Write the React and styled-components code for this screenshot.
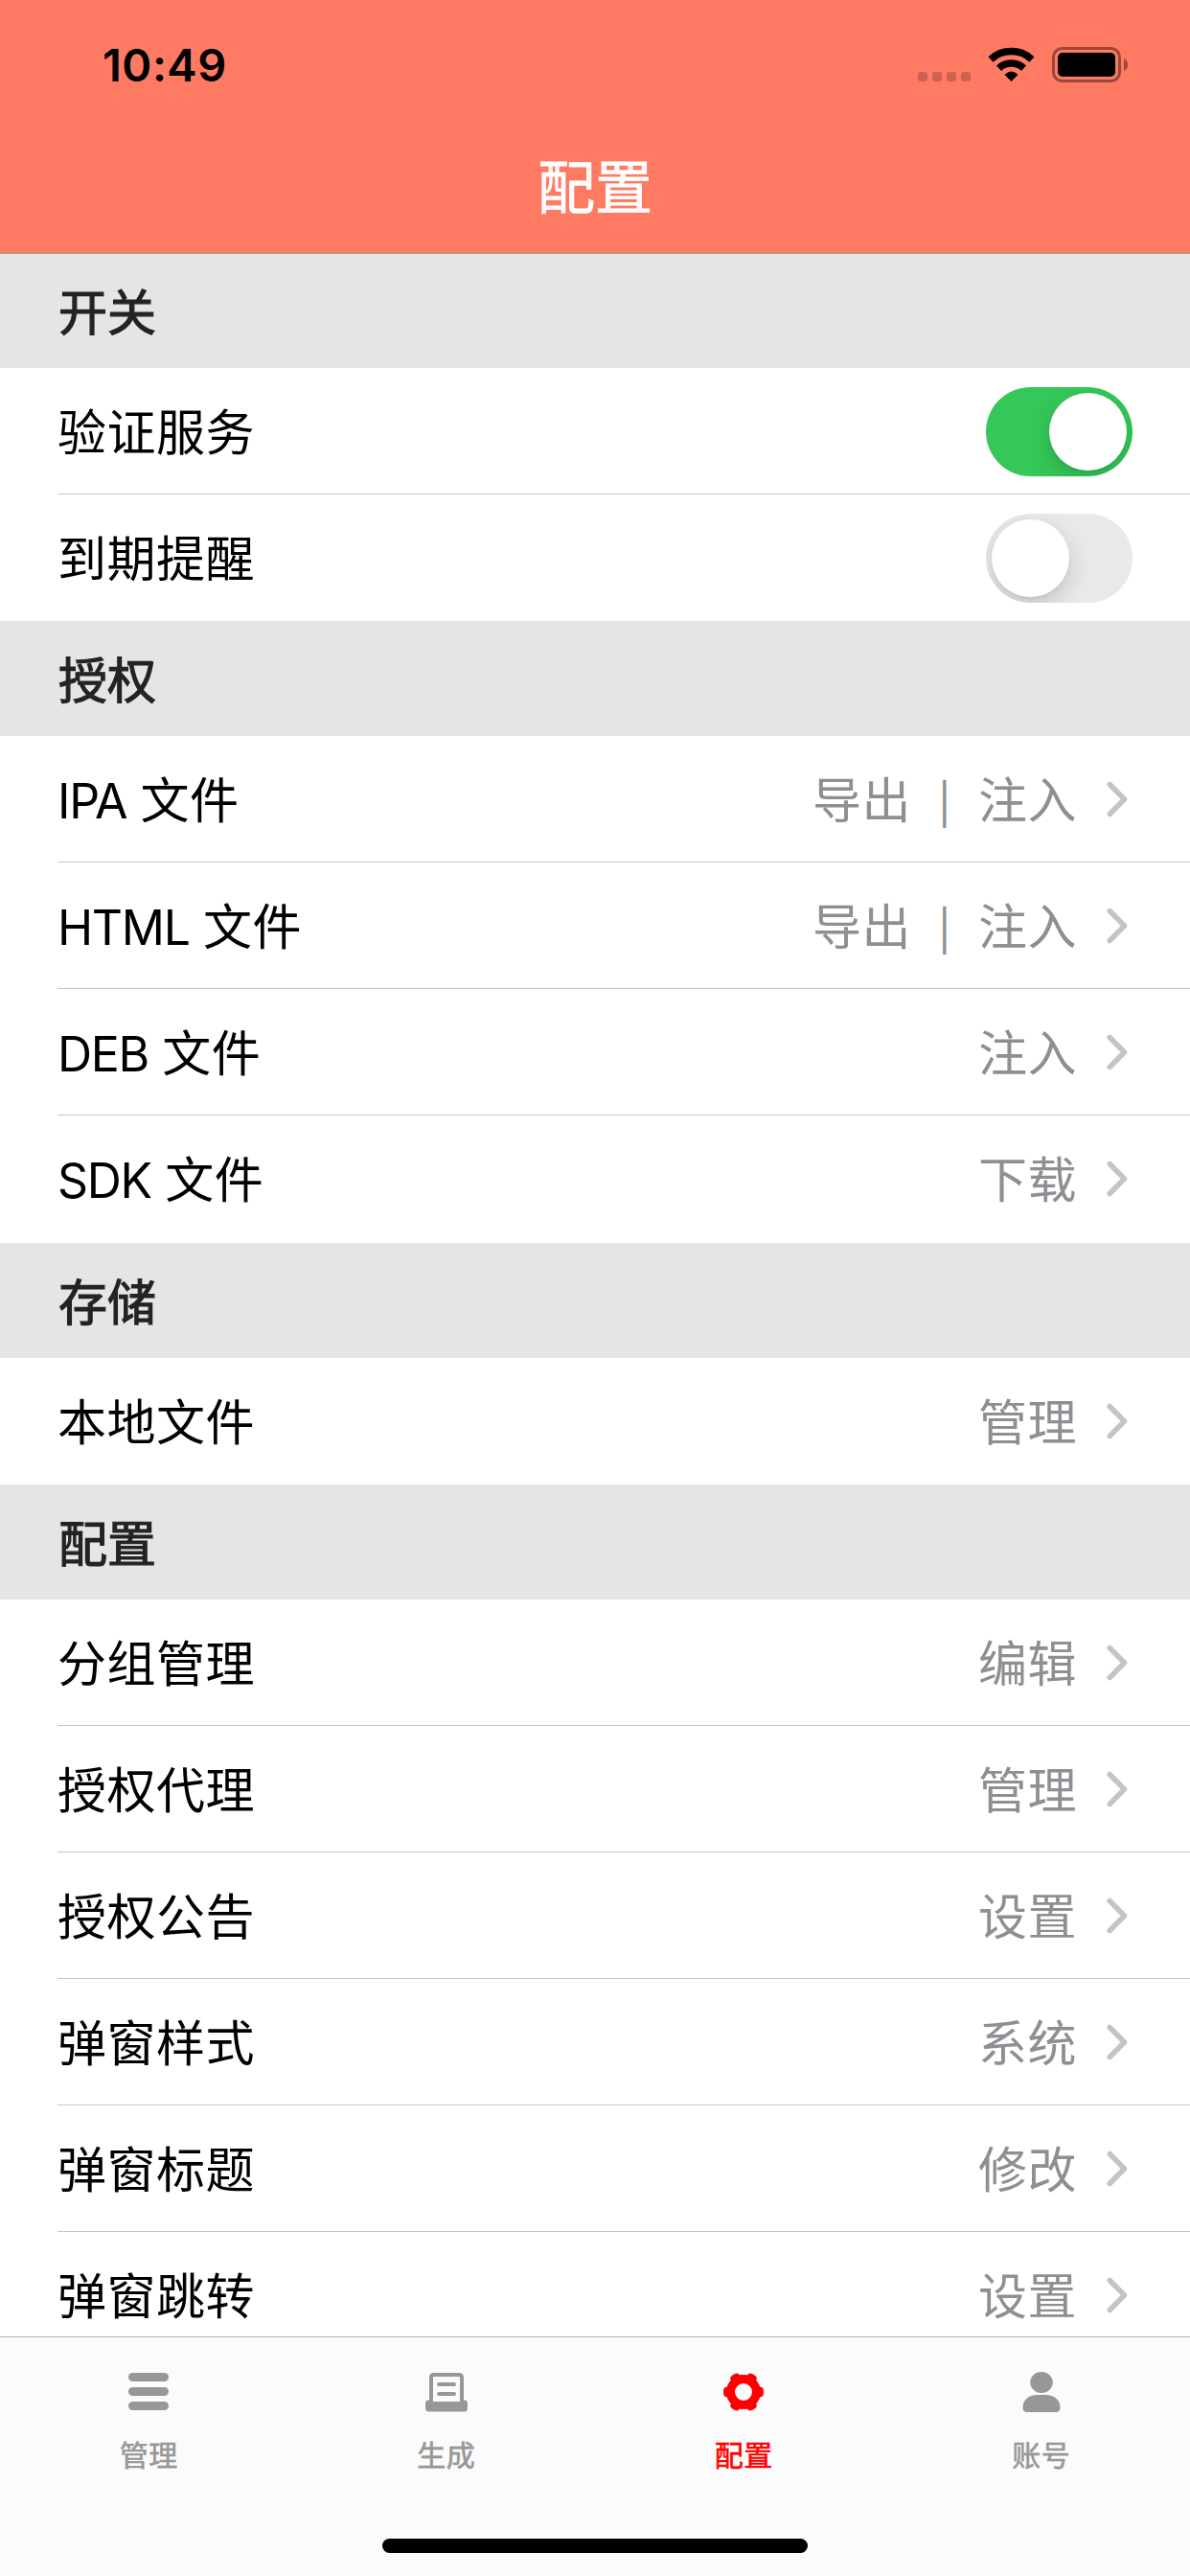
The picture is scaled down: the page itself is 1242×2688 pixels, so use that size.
import React, { useState } from 'react';
import styled, { createGlobalStyle } from 'styled-components';

const GlobalStyle = createGlobalStyle`
  * {
    box-sizing: border-box;
  }
  body {
    margin: 0;
    background: #fff;
    font-family: Inter, 'Noto Sans CJK SC', sans-serif;
  }
`;

const Screen = styled.div`
  display: flex;
  flex-direction: column;
  width: 1242px;
  height: 2688px;
  overflow: hidden;
  background: #fff;
`;

const Header = styled.header`
  flex: none;
  height: 264px;
  background: #ff7a63;
`;

const StatusBar = styled.div`
  display: flex;
  justify-content: space-between;
  height: 132px;
  padding: 0 65px 0 107px;
`;

const Time = styled.span`
  font-size: 47px;
  font-weight: 600;
  line-height: 136px;
  letter-spacing: 0.5px;
`;

const StatusIcons = styled.svg`
  width: 220px;
  height: 38px;
  margin-top: 49px;
`;

const Title = styled.h1`
  margin: 0;
  height: 132px;
  color: #fff;
  font-family: 'Noto Sans CJK SC', sans-serif;
  font-size: 60px;
  font-weight: 400;
  line-height: 120px;
  text-align: center;
  -webkit-text-stroke: 0.8px currentColor;
`;

const List = styled.main`
  flex: 1;
  min-height: 0;
  overflow: hidden;
  border-top: 1px solid #a0a3a8;
`;

const SectionTitle = styled.h2`
  display: flex;
  align-items: center;
  height: 120px;
  margin: 0;
  padding: 0 60px 3px 61px;
  background: #e5e5e5;
  color: #232323;
  font-family: 'Noto Sans CJK SC', sans-serif;
  font-size: 51px;
  font-weight: 400;
  -webkit-text-stroke: 1.2px currentColor;
`;

const Section = styled.section`
  &:first-child > ${SectionTitle} {
    height: 119px;
  }
`;

const Row = styled.div`
  display: flex;
  justify-content: space-between;
  align-items: center;
  height: 132px;
  margin-left: 60px;
  padding-right: 60px;
  border-bottom: 1px solid #c6c6c8;

  &:last-child {
    border-bottom-color: #fff;
  }
  &:nth-child(5) {
    height: ${(props) => (props.$last ? '133px' : '132px')};
  }
`;

const Label = styled.span`
  padding-bottom: 4px;
  font-family: 'Noto Sans CJK SC', sans-serif;
  font-size: 51px;
  letter-spacing: 0.5px;
  line-height: 74px;
  white-space: pre;
`;

const Latin = styled.span`
  margin-right: 1.5px;
  font-family: Inter, sans-serif;
  font-size: 50px;
  letter-spacing: -1.3px;
  line-height: 1;
`;

const Detail = styled.span`
  display: flex;
  align-items: center;
`;

const Value = styled(Label)`
  color: #8e8e93;
`;

const Bar = styled.span`
  display: inline-block;
  width: 70px;
  font-family: Inter, sans-serif;
  font-size: 42px;
  line-height: 1;
  text-align: center;
`;

const Chevron = styled.svg`
  width: 22px;
  height: 38px;
  margin: 0 5px 0 31px;
`;

const Switch = styled.button`
  width: 153px;
  height: 93px;
  margin-top: 1px;
  padding: 6px;
  border: none;
  border-radius: 47px;
  overflow: hidden;
  background: ${(props) => (props.$on ? '#35c759' : '#e9e9eb')};
`;

const Knob = styled.span`
  display: block;
  width: 81px;
  height: 81px;
  margin-left: ${(props) => (props.$on ? '60px' : '0')};
  border-radius: 50%;
  background: #fff;
  box-shadow: 0 9px 24px rgba(0, 0, 0, 0.16), 0 3px 3px rgba(0, 0, 0, 0.04);
`;

const TabBar = styled.nav`
  flex: none;
  height: 250px;
  border-top: 1px solid #b0b0b0;
  background: #fbfbfb;
`;

const Tabs = styled.div`
  display: grid;
  grid-template-columns: repeat(4, 1fr);
  height: 210px;
`;

const Tab = styled.div`
  display: flex;
  flex-direction: column;
  align-items: center;
  padding-top: 33px;
  color: ${(props) => (props.$active ? '#ff0000' : '#979797')};
  font-family: 'Noto Sans CJK SC', sans-serif;
  font-size: 30px;
  font-weight: 400;
  line-height: 44px;
  letter-spacing: 0.5px;
  -webkit-text-stroke: 0.6px currentColor;

  svg {
    width: 48px;
    height: 48px;
    margin-bottom: 18px;
  }
`;

const HomeIndicator = styled.div`
  width: 444px;
  height: 15px;
  margin: 0 auto;
  border-radius: 8px;
  background: #000;
`;

const sections = [
  {
    title: '开关',
    rows: [
      { label: '验证服务', toggle: true, on: true },
      { label: '到期提醒', toggle: true, on: false },
    ],
  },
  {
    title: '授权',
    rows: [
      { latin: 'IPA', label: '文件', values: ['导出', '注入'] },
      { latin: 'HTML', label: '文件', values: ['导出', '注入'] },
      { latin: 'DEB', label: '文件', values: ['注入'] },
      { latin: 'SDK', label: '文件', values: ['下载'], last: true },
    ],
  },
  {
    title: '存储',
    rows: [{ label: '本地文件', values: ['管理'] }],
  },
  {
    title: '配置',
    rows: [
      { label: '分组管理', values: ['编辑'] },
      { label: '授权代理', values: ['管理'] },
      { label: '授权公告', values: ['设置'] },
      { label: '弹窗样式', values: ['系统'] },
      { label: '弹窗标题', values: ['修改'] },
      { label: '弹窗跳转', values: ['设置'] },
    ],
  },
];

// one gear tooth per 60 degrees, rotated around the centre
const gearAngles = [0, 60, 120, 180, 240, 300];

const tabs = [
  {
    name: '管理',
    icon: (
      <svg viewBox="0 0 48 48" fill="currentColor" stroke="none">
        <rect x="3" y="4" width="42" height="9" rx="4.5" />
        <rect x="3" y="19" width="42" height="9" rx="4.5" />
        <rect x="3" y="34" width="42" height="9" rx="4.5" />
      </svg>
    ),
  },
  {
    name: '生成',
    icon: (
      <svg viewBox="0 0 48 48" fill="none" stroke="currentColor" strokeWidth="4">
        <path d="M8 35V9q0-3 3-3h26q3 0 3 3v26" />
        <path d="M16 16h16M16 26h16" strokeLinecap="round" />
        <path
          d="M5 32.5h5V34h28v-1.500h5q3 0 3 4v3q0 5-3 5H5q-3 0-3-5v-3q0-4 3-4z"
          fill="currentColor"
          stroke="none"
        />
      </svg>
    ),
  },
  {
    name: '配置',
    active: true,
    icon: (
      <svg viewBox="0 0 48 48" fill="currentColor">
        <circle cx="24" cy="24" r="13.500" fill="none" stroke="currentColor" strokeWidth="9" />
        {gearAngles.map((angle) => (
          <path
            key={angle}
            d="M37 14.500q1 3.500 5.500 4.500q2.500 0 2.500 5t-2.500 5q-4.500 1-5.500 4.500z"
            transform={`rotate(${angle} 24 24)`}
          />
        ))}
      </svg>
    ),
  },
  {
    name: '账号',
    icon: (
      <svg viewBox="0 0 48 48" fill="currentColor">
        <ellipse cx="24" cy="14" rx="11.800" ry="11" />
        <path d="M20 27h8c10 0 15.500 6 15.500 13 0 3.500-1.500 5-5 5h-29c-3.500 0-5-1.500-5-5 0-7 5.500-13 15.500-13z" />
      </svg>
    ),
  },
];

function Toggle({ initial }) {
  const [on, setOn] = useState(initial);
  return (
    <Switch $on={on} role="switch" aria-checked={on} onClick={() => setOn(!on)}>
      <Knob $on={on} />
    </Switch>
  );
}

function ListRow({ row }) {
  return (
    <Row $last={row.last}>
      <Label>
        {row.latin && <Latin>{row.latin} </Latin>}
        {row.label}
      </Label>
      {row.toggle ? (
        <Toggle initial={row.on} />
      ) : (
        <Detail>
          <Value>
            {row.values.map((value, index) => (
              <React.Fragment key={value}>
                {index > 0 && <Bar>|</Bar>}
                {value}
              </React.Fragment>
            ))}
          </Value>
          <Chevron viewBox="0 0 22 38" fill="none">
            <path
              d="M3.200 3.500L18.500 19L3.200 34.500"
              stroke="#c4c4c6"
              strokeWidth="5.500"
              strokeLinecap="round"
              strokeLinejoin="round"
            />
          </Chevron>
        </Detail>
      )}
    </Row>
  );
}

function App() {
  return (
    <Screen>
      <GlobalStyle />
      <Header>
        <StatusBar>
          <Time>10:49</Time>
          <StatusIcons viewBox="957 49 220 38">
            <g fillOpacity="0.2">
              <rect x="958" y="75" width="10" height="10" rx="3" />
              <rect x="973" y="75" width="10" height="10" rx="3" />
              <rect x="988" y="75" width="10" height="10" rx="3" />
              <rect x="1003" y="75" width="10" height="10" rx="3" />
            </g>
            <path d="M1055.500 85L1049 78.500Q1048.500 78 1049 77.500Q1055.500 71.500 1062 77.500Q1062.500 78 1062 78.500Z" />
            <g fill="none" stroke="#000" strokeWidth="7.500">
              <path d="M1042.500 71.200A19 19 0 0 1 1068.500 71.200" />
              <path d="M1034 62A31.500 31.500 0 0 1 1077 62" />
            </g>
            <rect x="1099.500" y="50.500" width="69" height="34" rx="9" fill="none" stroke="#000" strokeOpacity="0.4" strokeWidth="3" />
            <rect x="1104" y="55" width="60" height="25" rx="5" />
            <path d="M1173 61q4 2 4 6.500t-4 6.500z" fillOpacity="0.4" />
          </StatusIcons>
        </StatusBar>
        <Title>配置</Title>
      </Header>

      <List>
        {sections.map((section) => (
          <Section key={section.title}>
            <SectionTitle>{section.title}</SectionTitle>
            {section.rows.map((row) => (
              <ListRow key={row.label + (row.latin || '')} row={row} />
            ))}
          </Section>
        ))}
      </List>

      <TabBar>
        <Tabs>
          {tabs.map((tab) => (
            <Tab key={tab.name} $active={tab.active}>
              {tab.icon}
              {tab.name}
            </Tab>
          ))}
        </Tabs>
        <HomeIndicator />
      </TabBar>
    </Screen>
  );
}

export default App;
